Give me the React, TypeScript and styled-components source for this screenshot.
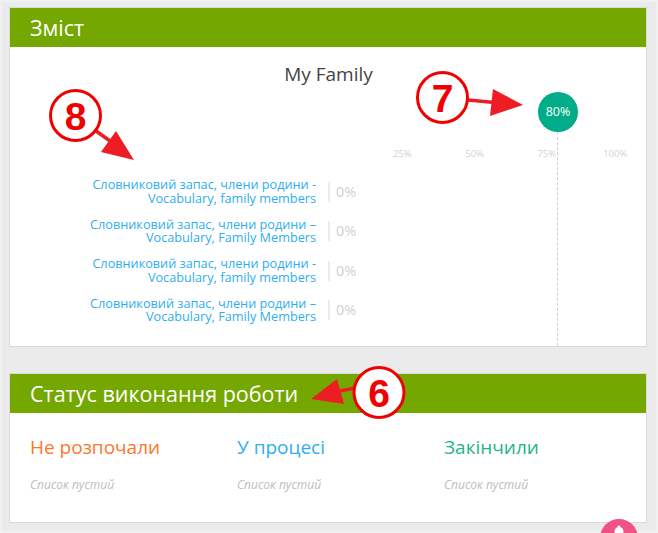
import React from "react";
import styled, { createGlobalStyle } from "styled-components";

const Global = createGlobalStyle`
  html, body { margin: 0; padding: 0; height: 533px; overflow: hidden; background: #ebebeb; }
  body { font-family: "Open Sans", "Liberation Sans", sans-serif; }
`;
const Page = styled.div`
  position: relative;
  width: 658px;
  height: 533px;
  overflow: hidden;
  box-sizing: border-box;
  padding: 7px 11px 0 9px;
  box-shadow: inset 0 0 0 2px #f1f1f1;
  display: flex;
  flex-direction: column;
  gap: 26px;
`;
const Card = styled.section<{ $height: number }>`
  height: ${(p) => p.$height}px;
  box-sizing: border-box;
  background: #fff;
  border: 1px solid #dadada;
  display: flex;
  flex-direction: column;
`;
const CardHeader = styled.header`
  height: 39px;
  flex: none;
  background: #74a800;
  color: #fff;
  font-size: 21.5px;
  line-height: 39px;
  padding-left: 20px;
`;
const ChartTitle = styled.h2`
  margin: 15px 0 0;
  font-weight: 400;
  font-size: 19px;
  line-height: 24px;
  color: #444;
  text-align: center;
  padding-left: 1px;
`;
const Chart = styled.div`
  position: relative;
  flex: 1;
`;
const Axis = styled.div`
  display: flex;
  gap: 53.5px;
  margin: 61px 0 0 383px;
  font-size: 9.5px;
  line-height: 14px;
  color: #d2d2d2;
  span:last-child {
    margin-left: -6.5px;
  }
`;
const Rows = styled.div`
  margin-top: 11px;
  display: flex;
  flex-direction: column;
`;
const Row = styled.div`
  display: flex;
  align-items: center;
  height: 39.5px;
`;
const RowLabel = styled.a`
  width: 306px;
  flex: none;
  text-align: right;
  font-size: 12.7px;
  line-height: 13.5px;
  color: #2eaef0;
`;
const RowValue = styled.span`
  margin-left: 12px;
  border-left: 2px solid #ececec;
  padding-left: 6px;
  height: 20px;
  line-height: 20px;
  font-size: 14.5px;
  color: #d0d0d0;
`;
const Marker = styled.div`
  position: absolute;
  left: 547px;
  top: 85px;
  bottom: 0;
  border-left: 1px dashed #cfcfcf;
`;
const Bubble = styled.div`
  position: absolute;
  left: 528px;
  top: 45px;
  width: 40px;
  height: 40px;
  border-radius: 50%;
  background: #00ad88;
  color: #fff;
  font-size: 12.5px;
  line-height: 40px;
  text-align: center;
`;
const Columns = styled.div`
  display: grid;
  grid-template-columns: repeat(3, 207px);
  padding: 21px 0 0 20px;
`;
const ColumnTitle = styled.h3<{ $color: string }>`
  margin: 0;
  font-weight: 400;
  font-size: 19px;
  line-height: 26px;
  color: ${(p) => p.$color};
`;
const Empty = styled.p`
  margin: 17px 0 0;
  font-style: italic;
  font-size: 12px;
  line-height: 16px;
  color: #bdbdbd;
`;
const Fab = styled.div`
  position: absolute;
  left: 600px;
  top: 519px;
  width: 38px;
  height: 38px;
  border-radius: 50%;
  background: #ef5285;
  display: flex;
  justify-content: center;
  padding-top: 6px;
  box-sizing: border-box;
`;
const Overlay = styled.svg`
  position: absolute;
  left: 0;
  top: 0;
  pointer-events: none;
`;
const Digit = styled.text`
  font-family: "Liberation Sans", Arial, sans-serif;
  font-weight: 700;
  font-size: 39px;
  fill: #f00000;
  text-anchor: middle;
`;

const rows = [
  ["Словниковий запас, члени родини -", "Vocabulary, family members"],
  ["Словниковий запас, члени родини –", "Vocabulary, Family Members"],
  ["Словниковий запас, члени родини -", "Vocabulary, family members"],
  ["Словниковий запас, члени родини –", "Vocabulary, Family Members"],
];
const columns = [
  { title: "Не розпочали", color: "#f9782a" },
  { title: "У процесі", color: "#2eaef0" },
  { title: "Закінчили", color: "#1fb48c" },
];

function Callout({ cx, cy, n, shaft, head }: { cx: number; cy: number; n: string; shaft: string; head: string }) {
  return (
    <g>
      <polyline points={shaft} fill="none" stroke="#ee1c25" strokeWidth={3.5} />
      <polygon points={head} fill="#ee1c25" />
      <circle cx={cx} cy={cy} r={25} fill="#fff" stroke="#f00000" strokeWidth={3} />
      <Digit x={cx} y={cy + 14}>{n}</Digit>
    </g>
  );
}

export default function App() {
  return (
    <Page>
      <Global />
      <Card $height={340}>
        <CardHeader>Зміст</CardHeader>
        <Chart>
          <ChartTitle>My Family</ChartTitle>
          <Axis>
            <span>25%</span>
            <span>50%</span>
            <span>75%</span>
            <span>100%</span>
          </Axis>
          <Rows>
            {rows.map((r, i) => (
              <Row key={i}>
                <RowLabel>
                  {r[0]}
                  <br />
                  {r[1]}
                </RowLabel>
                <RowValue>0%</RowValue>
              </Row>
            ))}
          </Rows>
          <Marker />
          <Bubble>80%</Bubble>
        </Chart>
      </Card>
      <Card $height={150}>
        <CardHeader>Статус виконання роботи</CardHeader>
        <Columns>
          {columns.map((c) => (
            <div key={c.title}>
              <ColumnTitle $color={c.color}>{c.title}</ColumnTitle>
              <Empty>Список пустий</Empty>
            </div>
          ))}
        </Columns>
      </Card>
      <Fab>
        <svg width="16" height="16" viewBox="0 0 16 16" fill="#fff">
          <circle cx="8" cy="2" r="1.5" />
          <path d="M8 2c-3 0-4.5 2-4.5 5v3L2 12v1h12v-1l-1.5-2V7c0-3-1.5-5-4.5-5z" />
        </svg>
      </Fab>
      <Overlay width="658" height="533" viewBox="0 0 658 533">
        <Callout cx={75.5} cy={115.5} n="8" shaft="96,131 120,148" head="116,131 134,160 101,152" />
        <Callout cx={442.5} cy={97.5} n="7" shaft="468,100 500,103" head="493,89 523,105 490,116" />
        <Callout cx={379} cy={392.5} n="6" shaft="355,388 330,393" head="337,379 311,399 344,404" />
      </Overlay>
    </Page>
  );
}
